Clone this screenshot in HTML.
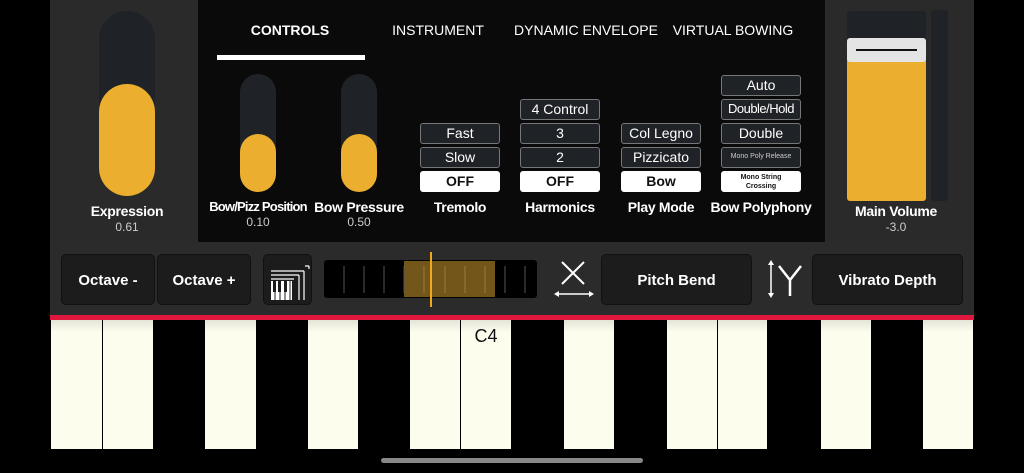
<!DOCTYPE html>
<html><head><meta charset="utf-8"><style>
*{margin:0;padding:0;box-sizing:border-box}
body{width:1024px;height:473px;background:#000;position:relative;overflow:hidden;font-family:"Liberation Sans",sans-serif;color:#fff}
.a{position:absolute}
.lbl{position:absolute;text-align:center;font-weight:bold;font-size:14px;letter-spacing:-0.3px}
.val{position:absolute;text-align:center;font-size:12px;color:#ccc}
.tab{position:absolute;top:22px;font-size:14px;text-align:center;width:160px}
.btn{position:absolute;height:21px;background:#1f2226;border:1.5px solid #777;border-radius:3px;font-size:14px;text-align:center;line-height:18px;color:#fff}
.on{background:#fff;color:#111;font-weight:bold;border-color:#fff}
.bb{position:absolute;background:#1c1c1c;border:1px solid #111;border-radius:5px;font-weight:bold;font-size:15px;text-align:center;color:#fff}
.wk{position:absolute;top:320px;height:129px;background:linear-gradient(#e4e4d8,#fdfdee 12px)}
</style></head><body>
<div class="a" style="left:50px;top:0;width:148px;height:242px;background:#2a2a2a"></div>
<div class="a" style="left:198px;top:0;width:627px;height:242px;background:#0a0a0a"></div>
<div class="a" style="left:825px;top:0;width:149px;height:242px;background:#2a2a2a"></div>

<div class="a" style="left:99px;top:11px;width:56px;height:185px;border-radius:28px;background:#1f2226"></div>
<div class="a" style="left:99px;top:84px;width:56px;height:112px;border-radius:28px;background:#ecae2e"></div>
<div class="lbl" style="left:50px;width:154px;top:203px">Expression</div>
<div class="val" style="left:50px;width:154px;top:220px">0.61</div>

<div class="a" style="left:240px;top:74px;width:36px;height:118px;border-radius:18px;background:#1f2226"></div>
<div class="a" style="left:240px;top:134px;width:36px;height:58px;border-radius:18px;background:#ecae2e"></div>
<div class="lbl" style="left:198px;width:120px;top:199px;font-size:13px;letter-spacing:-0.8px">Bow/Pizz Position</div>
<div class="val" style="left:198px;width:120px;top:215px">0.10</div>
<div class="a" style="left:341px;top:74px;width:36px;height:118px;border-radius:18px;background:#1f2226"></div>
<div class="a" style="left:341px;top:134px;width:36px;height:58px;border-radius:18px;background:#ecae2e"></div>
<div class="lbl" style="left:299px;width:120px;top:199px">Bow Pressure</div>
<div class="val" style="left:299px;width:120px;top:215px">0.50</div>

<div class="tab" style="left:210px;font-weight:bold">CONTROLS</div>
<div class="tab" style="left:358px">INSTRUMENT</div>
<div class="tab" style="left:506px">DYNAMIC ENVELOPE</div>
<div class="tab" style="left:653px">VIRTUAL BOWING</div>
<div class="a" style="left:217px;top:55px;width:148px;height:5px;background:#fff"></div>

<div class="btn" style="left:420px;top:123px;width:80px">Fast</div>
<div class="btn" style="left:420px;top:147px;width:80px">Slow</div>
<div class="btn on" style="left:420px;top:171px;width:80px">OFF</div>
<div class="lbl" style="left:410px;width:100px;top:199px">Tremolo</div>

<div class="btn" style="left:520px;top:99px;width:80px">4 Control</div>
<div class="btn" style="left:520px;top:123px;width:80px">3</div>
<div class="btn" style="left:520px;top:147px;width:80px">2</div>
<div class="btn on" style="left:520px;top:171px;width:80px">OFF</div>
<div class="lbl" style="left:510px;width:100px;top:199px">Harmonics</div>

<div class="btn" style="left:621px;top:123px;width:80px">Col Legno</div>
<div class="btn" style="left:621px;top:147px;width:80px">Pizzicato</div>
<div class="btn on" style="left:621px;top:171px;width:80px">Bow</div>
<div class="lbl" style="left:611px;width:100px;top:199px">Play Mode</div>

<div class="btn" style="left:721px;top:75px;width:80px">Auto</div>
<div class="btn" style="left:721px;top:99px;width:80px;font-size:13px;letter-spacing:-0.5px">Double/Hold</div>
<div class="btn" style="left:721px;top:123px;width:80px">Double</div>
<div class="btn" style="left:721px;top:147px;width:80px;font-size:7px;color:#ccc">Mono Poly Release</div>
<div class="btn on" style="left:721px;top:171px;width:80px;font-size:7px;line-height:9px;padding-top:1px">Mono String<br>Crossing</div>
<div class="lbl" style="left:706px;width:110px;top:199px">Bow Polyphony</div>

<div class="a" style="left:847px;top:11px;width:79px;height:190px;border-radius:3px;background:#1f2226"></div>
<div class="a" style="left:847px;top:45px;width:79px;height:156px;border-radius:3px;background:#ecae2e"></div>
<div class="a" style="left:847px;top:38px;width:79px;height:24px;border-radius:3px;background:#e4e4e4"></div>
<div class="a" style="left:856px;top:49px;width:61px;height:2px;background:#111"></div>
<div class="a" style="left:931px;top:10px;width:17px;height:191px;border-radius:3px;background:#1f2226"></div>
<div class="lbl" style="left:836px;width:120px;top:203px">Main Volume</div>
<div class="val" style="left:836px;width:120px;top:220px">-3.0</div>

<div class="a" style="left:50px;top:242px;width:924px;height:74px;background:#2b2b2b"></div>
<div class="bb" style="left:61px;top:254px;width:94px;height:51px;line-height:51px">Octave -</div>
<div class="bb" style="left:157px;top:254px;width:94px;height:51px;line-height:51px">Octave +</div>
<div class="bb" style="left:263px;top:254px;width:49px;height:51px"></div>
<svg class="a" style="left:263px;top:254px" width="49" height="51">
<path d="M8 17h33M8 21h28M8 25h23" stroke="#fff" stroke-width="1.2" fill="none"/>
<path d="M36 21v25M41 17v29M46 12v3M42 12h4" stroke="#fff" stroke-width="1.2" fill="none"/>
<rect x="8" y="27" width="21" height="19" fill="#fff"/>
<path d="M12 27v19M17 27v19M22 27v19M27 27v19" stroke="#1c1c1c" stroke-width="1"/>
<rect x="10" y="27" width="3" height="11" fill="#1c1c1c"/><rect x="15" y="27" width="3" height="11" fill="#1c1c1c"/><rect x="21" y="27" width="3" height="11" fill="#1c1c1c"/>
</svg>
<div class="a" style="left:324px;top:260px;width:213px;height:38px;background:#000;border-radius:3px"></div>
<div class="a" style="left:404px;top:261px;width:91px;height:36px;background:#72561a"></div>
<svg class="a" style="left:324px;top:260px" width="213" height="38">
<g stroke="#555" stroke-width="1"><path d="M20 6v27M40 6v27M60 6v27M80 6v27M181 6v27M201 6v27"/></g>
<g stroke="#9a7a3a" stroke-width="1"><path d="M100 6v27M121 6v27M141 6v27M161 6v27"/></g>
</svg>
<div class="a" style="left:430px;top:252px;width:2px;height:55px;background:#f2a81d"></div>
<svg class="a" style="left:552px;top:258px" width="44" height="42">
<path d="M10 4l22 22M32 4L10 26" stroke="#fff" stroke-width="2" fill="none"/>
<path d="M4 36h36" stroke="#fff" stroke-width="1.5"/><path d="M2 36l5-3v6zM42 36l-5-3v6z" fill="#fff"/>
</svg>
<div class="bb" style="left:601px;top:254px;width:151px;height:51px;line-height:51px">Pitch Bend</div>
<svg class="a" style="left:762px;top:258px" width="42" height="42">
<path d="M9 5v32" stroke="#fff" stroke-width="1.5"/><path d="M9 2l-3 5h6zM9 40l-3-5h6z" fill="#fff"/>
<path d="M17 8l11 14l11-14M28 22v16" stroke="#fff" stroke-width="2.5" fill="none"/>
</svg>
<div class="bb" style="left:812px;top:254px;width:151px;height:51px;line-height:51px">Vibrato Depth</div>

<div class="a" style="left:50px;top:315px;width:924px;height:5px;background:#e0183e"></div>

<div class="a" style="left:50px;top:320px;width:924px;height:129px;background:#000"></div>
<div class="wk" style="left:51px;width:51px"></div>
<div class="wk" style="left:103px;width:50px"></div>
<div class="wk" style="left:205px;width:51px"></div>
<div class="wk" style="left:308px;width:50px"></div>
<div class="wk" style="left:410px;width:50px"></div>
<div class="wk" style="left:461px;width:50px"></div>
<div class="wk" style="left:564px;width:50px"></div>
<div class="wk" style="left:667px;width:50px"></div>
<div class="wk" style="left:718px;width:49px"></div>
<div class="wk" style="left:821px;width:50px"></div>
<div class="wk" style="left:923px;width:50px"></div>
<div class="a" style="left:461px;top:326px;width:50px;text-align:center;font-size:18px;color:#111">C4</div>

<div class="a" style="left:381px;top:458px;width:262px;height:5px;border-radius:3px;background:#888"></div>
</body></html>
